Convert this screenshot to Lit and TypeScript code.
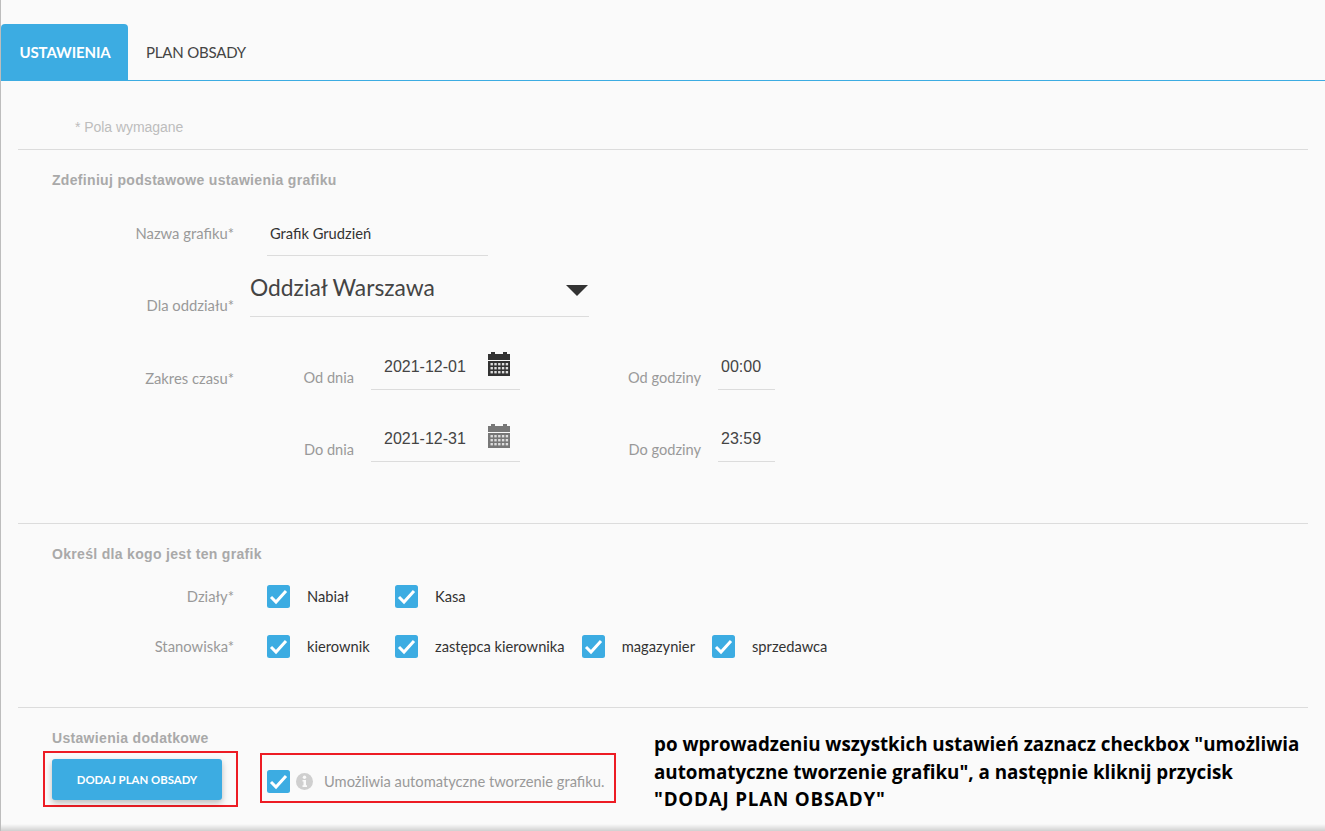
import { LitElement, html, css, svg } from "lit";
import { customElement } from "lit/decorators.js";

const calendar = (cls: string) => html`<svg class="cal ${cls}" viewBox="0 0 22 24" width="22" height="24">
  <rect x="3" y="0" width="4" height="3" fill="currentColor"></rect>
  <rect x="15" y="0" width="4" height="3" fill="currentColor"></rect>
  <rect x="0" y="2" width="22" height="6" fill="currentColor"></rect>
  <rect x="0" y="9" width="22" height="15" fill="currentColor"></rect>
  ${[0, 1, 2, 3, 4].flatMap((c) =>
    [0, 1, 2].map((r) => svg`<rect x="${2.5 + c * 3.8}" y="${11 + r * 4}" width="2.4" height="2.4" fill="#ddd"></rect>`)
  )}
</svg>`;

const box = () => html`<svg class="box" viewBox="0 0 23 23" width="23" height="23">
  <rect width="23" height="23" rx="2.5" fill="#3cace2"></rect>
  <path d="M4 12 L9 17 L19 6" fill="none" stroke="#fff" stroke-width="3"></path>
</svg>`;

const check = (label: string) => html`<div class="check">${box()}<span>${label}</span></div>`;

@customElement("app-root")
export class AppRoot extends LitElement {
  static styles = css`
    :host {
      display: block;
      font-family: Lato, "Liberation Sans", sans-serif;
    }
    .page {
      height: 831px;
      box-sizing: border-box;
      border-left: 1px solid #bdbdbd;
      background: #fafafa;
      display: flex;
      flex-direction: column;
      overflow: hidden;
    }
    .tabs {
      display: flex;
      margin-top: 24px;
      height: 56px;
      flex: none;
      border-bottom: 1px solid #3cace2;
    }
    .tab {
      display: flex;
      align-items: center;
      font-size: 15px;
      color: #444;
      padding: 0 18px;
      letter-spacing: -0.2px;
    }
    .tab.active {
      width: 127px;
      box-sizing: border-box;
      padding: 0 0 0 18.5px;
      background: #3cace2;
      color: #fff;
      font-weight: 700;
      letter-spacing: -0.12px;
      border-radius: 4px 4px 0 0;
    }
    .content {
      margin: 0 17px;
      flex: none;
    }
    .required {
      height: 68px;
      box-sizing: border-box;
      padding: 24px 0 0 57px;
      display: flex;
      align-items: center;
      font: 14px "Liberation Sans", sans-serif;
      color: #bdbdbd;
      letter-spacing: -0.05px;
    }
    .section {
      border-top: 1px solid #dcdcdc;
    }
    .s1 { padding-bottom: 61px; }
    .s2 { padding-bottom: 49px; }
    .s3 { display: flex; }
    h2 {
      margin: 0;
      padding: 20px 0 0 34px;
      font: bold 14px/20px "Liberation Sans", sans-serif;
      color: #a9a9a9;
      letter-spacing: 0.32px;
      white-space: nowrap;
    }
    .row {
      display: grid;
      grid-template-columns: 216px 1fr;
      column-gap: 16px;
    }
    .label {
      font-size: 14.8px;
      line-height: 22px;
      color: #999;
      text-align: right;
      white-space: nowrap;
    }
    .name-row { margin-top: 22px; }
    .name-row .label { align-self: center; padding-bottom: 2px; }
    .name-field {
      margin-left: 17px;
      width: 221px;
      height: 44px;
      box-sizing: border-box;
      padding: 0 0 2px 3px;
      border-bottom: 1px solid #dcdcdc;
      display: flex;
      align-items: center;
      font-size: 14.7px;
      color: #333;
    }
    .select-row { margin-top: 10px; }
    .select-row .label { align-self: end; padding-bottom: 1px; }
    .select-field {
      width: 339px;
      height: 51px;
      box-sizing: border-box;
      padding-bottom: 9px;
      border-bottom: 1px solid #dcdcdc;
      display: flex;
      align-items: center;
      justify-content: space-between;
      font-size: 22.8px;
      color: #444;
    }
    .arrow { margin-right: 1px; margin-top: 7px; }
    .time-row { margin-top: 28px; }
    .time-row > .label { padding-top: 22px; }
    .dates {
      display: grid;
      margin-left: 0;
      column-gap: 0;
      grid-template-columns: 104px 17px 149px 181px 17px 57px;
      grid-auto-rows: 45px;
      row-gap: 27px;
    }
    .dates .label { align-self: end; padding-bottom: 1px; font-size: 14.6px; }
    .field {
      box-sizing: border-box;
      border-bottom: 1px solid #dcdcdc;
      display: flex;
      align-items: center;
      justify-content: space-between;
      font: 16px "Liberation Sans", sans-serif;
      color: #444;
    }
    .date { padding: 0 10px 0 13px; }
    .time { padding-left: 3px; }
    .cal { margin-bottom: 7px; flex: none; }
    .cal.dark { color: #333; }
    .cal.gray { color: #777; }
    .checks-row { margin-top: 21px; }
    .checks-row + .checks-row { margin-top: 27px; }
    .checks-row .label { align-self: center; line-height: 20px; padding-bottom: 2px; }
    .checks {
      display: flex;
      margin-left: 17px;
    }
    .check {
      display: flex;
      align-items: center;
      gap: 17px;
      min-width: 111px;
      margin-right: 17px;
      font-size: 14.7px;
      color: #333;
      white-space: nowrap;
      height: 23px;
    }
    .check span { padding-bottom: 2px; }
    .box { flex: none; }
    .left { width: 220px; flex: none; }
    .red {
      border: 2px solid #ed1c24;
      box-sizing: border-box;
    }
    .btn-box {
      margin: 3px 0 0 25px;
      width: 195px;
      height: 56px;
      padding: 6px 0 0 7px;
    }
    .btn {
      width: 170px;
      height: 41px;
      background: #3cace2;
      border-radius: 3px;
      box-shadow: 0 3px 6px rgba(0, 0, 0, 0.25);
      display: flex;
      align-items: center;
      justify-content: center;
      color: #fff;
      font-size: 11.4px;
      font-weight: 700;
    }
    .auto-box {
      margin: 45px 0 0 22px;
      width: 356px;
      height: 50px;
      flex: none;
      padding: 15px 0 0 5px;
      display: flex;
      align-items: flex-start;
    }
    .info { margin: 3px 0 0 6px; flex: none; }
    .auto-text {
      margin-left: 11px;
      font-size: 14.7px;
      line-height: 23px;
      color: #999;
      white-space: nowrap;
    }
    .note {
      margin: 23px 0 0 38px;
      font: 700 18.8px/27.5px "Open Sans", sans-serif;
      color: #000;
      white-space: nowrap;
    }
    .caps { letter-spacing: 0.8px; }
    .foot {
      margin-top: auto;
      height: 7px;
      flex: none;
      background: linear-gradient(to bottom, rgba(200, 200, 200, 0), #d0d0d0);
    }
  `;

  render() {
    return html`<div class="page">
      <div class="tabs">
        <div class="tab active">USTAWIENIA</div>
        <div class="tab">PLAN OBSADY</div>
      </div>
      <div class="content">
        <div class="required">* Pola wymagane</div>
        <div class="section s1">
          <h2>Zdefiniuj podstawowe ustawienia grafiku</h2>
          <div class="row name-row">
            <div class="label">Nazwa grafiku*</div>
            <div class="name-field">Grafik Grudzień</div>
          </div>
          <div class="row select-row">
            <div class="label">Dla oddziału*</div>
            <div class="select-field">
              <span>Oddział Warszawa</span>
              <svg class="arrow" width="22" height="11" viewBox="0 0 22 11"><path d="M0 0H22L11 11Z" fill="#333"></path></svg>
            </div>
          </div>
          <div class="row time-row">
            <div class="label">Zakres czasu*</div>
            <div class="dates">
              <div class="label">Od dnia</div>
              <div></div>
              <div class="field date"><span>2021-12-01</span>${calendar("dark")}</div>
              <div class="label">Od godziny</div>
              <div></div>
              <div class="field time">00:00</div>
              <div class="label">Do dnia</div>
              <div></div>
              <div class="field date"><span>2021-12-31</span>${calendar("gray")}</div>
              <div class="label">Do godziny</div>
              <div></div>
              <div class="field time">23:59</div>
            </div>
          </div>
        </div>
        <div class="section s2">
          <h2>Określ dla kogo jest ten grafik</h2>
          <div class="row checks-row">
            <div class="label">Działy*</div>
            <div class="checks">${check("Nabiał")}${check("Kasa")}</div>
          </div>
          <div class="row checks-row">
            <div class="label">Stanowiska*</div>
            <div class="checks">
              ${check("kierownik")}${check("zastępca kierownika")}${check("magazynier")}${check("sprzedawca")}
            </div>
          </div>
        </div>
        <div class="section s3">
          <div class="left">
            <h2>Ustawienia dodatkowe</h2>
            <div class="red btn-box"><div class="btn">DODAJ PLAN OBSADY</div></div>
          </div>
          <div class="red auto-box">
            ${box()}
            <svg class="info" width="17" height="17" viewBox="0 0 17 17">
              <circle cx="8.5" cy="8.5" r="8.5" fill="#cfcfcf"></circle>
              <circle cx="8.5" cy="4.2" r="1.7" fill="#fafafa"></circle>
              <path d="M6.5 7H10V12.2H11V14H6.5V12.2H7.5V8.6H6.5Z" fill="#fafafa"></path>
            </svg>
            <span class="auto-text">Umożliwia automatyczne tworzenie grafiku.</span>
          </div>
          <div class="note">
            po wprowadzeniu wszystkich ustawień zaznacz checkbox "umożliwia<br />
            automatyczne tworzenie grafiku", a następnie kliknij przycisk<br />
            <span class="caps">"DODAJ PLAN OBSADY"</span>
          </div>
        </div>
      </div>
      <div class="foot"></div>
    </div>`;
  }
}
